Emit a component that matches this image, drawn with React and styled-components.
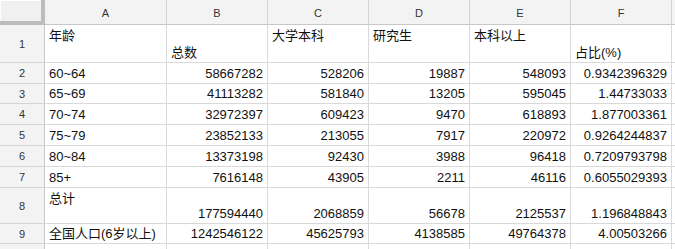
import React from "react";
import styled, { createGlobalStyle } from "styled-components";

const GlobalStyle = createGlobalStyle`
  html, body {
    margin: 0;
    padding: 0;
    background: #ffffff;
    overflow: hidden;
  }
  body {
    font-family: "Liberation Sans", Arial, "Noto Sans CJK SC", sans-serif;
  }
`;

const columns = ["A", "B", "C", "D", "E", "F"];

const rows = [
  { n: 1, h: 38, head: true, cells: [
    { t: "年龄", v: "top" }, { t: "总数", v: "bottom" }, { t: "大学本科", v: "top" },
    { t: "研究生", v: "top" }, { t: "本科以上", v: "top" }, { t: "占比(%)", v: "bottom" },
  ] },
  { n: 2, h: 21, cells: ["60~64", "58667282", "528206", "19887", "548093", "0.9342396329"] },
  { n: 3, h: 20, cells: ["65~69", "41113282", "581840", "13205", "595045", "1.44733033"] },
  { n: 4, h: 21, cells: ["70~74", "32972397", "609423", "9470", "618893", "1.877003361"] },
  { n: 5, h: 21, cells: ["75~79", "23852133", "213055", "7917", "220972", "0.9264244837"] },
  { n: 6, h: 21, cells: ["80~84", "13373198", "92430", "3988", "96418", "0.7209793798"] },
  { n: 7, h: 21, cells: ["85+", "7616148", "43905", "2211", "46116", "0.6055029393"] },
  { n: 8, h: 36, labelTop: true, cells: ["总计", "177594440", "2068859", "56678", "2125537", "1.196848843"] },
  { n: 9, h: 20, cells: ["全国人口(6岁以上)", "1242546122", "45625793", "4138585", "49764378", "4.00503266"] },
  { n: "", h: 20, cells: ["", "", "", "", "", ""] },
];

function App() {
  return (
    <>
      <GlobalStyle />
      <Sheet>
        <Corner />
        {columns.map((c) => (
          <ColHead key={c}>{c}</ColHead>
        ))}
        <ColHead />
        {rows.map((r, ri) => (
          <React.Fragment key={ri}>
            <RowHead $h={r.h}>{r.n}</RowHead>
            {r.cells.map((c, i) => {
              if (r.head) {
                return (
                  <Cell key={i} $h={r.h} $v={c.v}>
                    {c.t}
                  </Cell>
                );
              }
              const isLabel = i === 0;
              return (
                <Cell
                  key={i}
                  $h={r.h}
                  $right={!isLabel}
                  $v={r.labelTop && isLabel ? "top" : "bottom"}
                >
                  {c}
                </Cell>
              );
            })}
            <Cell $h={r.h} />
          </React.Fragment>
        ))}
      </Sheet>
    </>
  );
}

const Sheet = styled.div`
  display: grid;
  grid-template-columns: 45px 122px 101px 101px 101px 101px 101px 1fr;
  width: 675px;
  height: 249px;
  overflow: hidden;
  align-content: start;
`;

const Corner = styled.div`
  box-sizing: border-box;
  height: 25px;
  background: #f0f0f0;
  border-right: 4px solid #bcbcbc;
  border-bottom: 4px solid #bcbcbc;
  box-shadow: inset 1px 1px 0 #ffffff;
`;

const ColHead = styled.div`
  box-sizing: border-box;
  height: 25px;
  background: #f3f3f3;
  border-right: 1px solid #d4d4d4;
  border-bottom: 1px solid #c8c8c8;
  color: #333333;
  font-size: 11px;
  display: flex;
  align-items: center;
  justify-content: center;
  padding-top: 1px;
`;

const RowHead = styled.div`
  box-sizing: border-box;
  height: ${(p) => p.$h}px;
  background: #f3f3f3;
  border-right: 1px solid #c8c8c8;
  border-bottom: 1px solid #d4d4d4;
  color: #333333;
  font-size: 11px;
  display: flex;
  align-items: center;
  justify-content: center;
`;

const Cell = styled.div`
  box-sizing: border-box;
  height: ${(p) => p.$h}px;
  border-right: 1px solid #d9d9d9;
  border-bottom: 1px solid #d9d9d9;
  color: #111111;
  font-size: 13px;
  line-height: 15px;
  white-space: nowrap;
  overflow: hidden;
  display: flex;
  align-items: ${(p) => (p.$v === "top" ? "flex-start" : "flex-end")};
  justify-content: ${(p) => (p.$right ? "flex-end" : "flex-start")};
  padding: ${(p) => (p.$v === "top" ? "3px 4px 0" : "0 4px 2px")};
`;

export default App;
